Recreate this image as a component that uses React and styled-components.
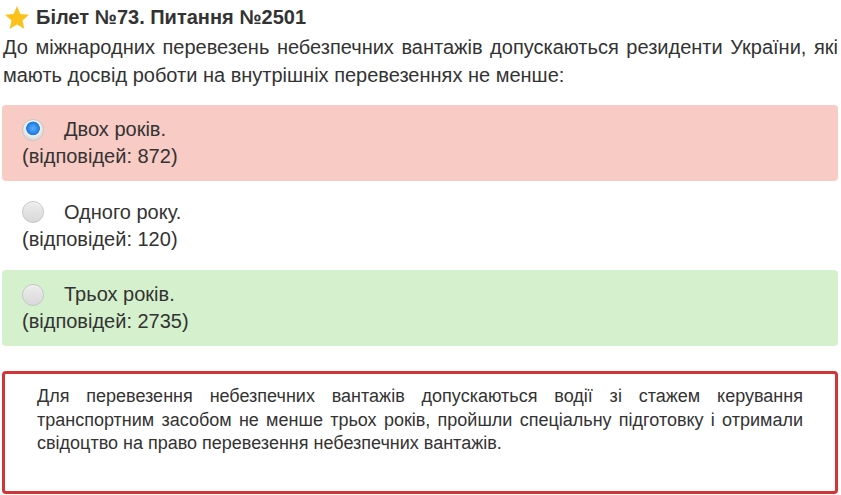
import styled, { createGlobalStyle } from 'styled-components'

const GlobalStyle = createGlobalStyle`
  html, body {
    margin: 0;
    padding: 0;
    background: #fff;
  }
  body {
    font-family: 'Liberation Sans', Arial, sans-serif;
    color: #333;
  }
`

const answers = [
  { text: 'Двох років.', count: 872, state: 'wrong', checked: true },
  { text: 'Одного року.', count: 120, state: 'none', checked: false },
  { text: 'Трьох років.', count: 2735, state: 'right', checked: false },
]

function Star() {
  return (
    <svg width="24" height="23" viewBox="1 0.8 22 21">
      <path
        d="M12 0.8 L15.1 8.1 L23 8.8 L17 14 L18.8 21.8 L12 17.7 L5.2 21.8 L7 14 L1 8.8 L8.9 8.1 Z"
        fill="#fcc21b"
      />
    </svg>
  )
}

function App() {
  return (
    <Page>
      <GlobalStyle />
      <Title>
        <Star />
        <span>Білет №73. Питання №2501</span>
      </Title>
      <Question>
        До міжнародних перевезень небезпечних вантажів допускаються резиденти України, які
        мають досвід роботи на внутрішніх перевезеннях не менше:
      </Question>
      <Answers>
        {answers.map((a) => (
          <Answer key={a.text} $state={a.state}>
            <AnswerLine>
              <Radio $checked={a.checked} />
              <span>{a.text}</span>
            </AnswerLine>
            <div>(відповідей: {a.count})</div>
          </Answer>
        ))}
      </Answers>
      <Explanation>
        Для перевезення небезпечних вантажів допускаються водії зі стажем керування
        транспортним засобом не менше трьох років, пройшли спеціальну підготовку і отримали
        свідоцтво на право перевезення небезпечних вантажів.
      </Explanation>
    </Page>
  )
}

export default App

const Page = styled.div`
  width: 836px;
  padding: 0 3px 0 2px;
  font-size: 20px;
`

const Title = styled.h1`
  display: flex;
  align-items: center;
  gap: 7px;
  margin: 0;
  padding: 5px 0 0 3px;
  height: 25px;
  font-size: 20px;
  font-weight: bold;
  color: #333;
`

const Question = styled.p`
  margin: 3px 0 0;
  padding-left: 1px;
  line-height: 28px;
  text-align: justify;
`

const Answers = styled.div`
  display: flex;
  flex-direction: column;
  gap: 6.5px;
  margin-top: 16px;
`

const Answer = styled.div`
  padding: 11px 20px;
  line-height: 27px;
  border-radius: 4px;
  background: ${(p) =>
    p.$state === 'wrong' ? '#f9cbc5' : p.$state === 'right' ? '#d5f0cd' : 'transparent'};
`

const AnswerLine = styled.div`
  display: flex;
  align-items: center;
  gap: 20px;
`

const Radio = styled.span`
  box-sizing: border-box;
  width: 22px;
  height: 22px;
  border-radius: 50%;
  border: 1px solid #c6c6c6;
  background: ${(p) =>
    p.$checked
      ? 'radial-gradient(circle at 50% 42%, #5aaefc 0, #2a86ea 5px, #1f78dc 6.5px, #f0f0f0 7.2px, #dcdcdc 10.5px)'
      : 'linear-gradient(#ececec, #d9d9d9)'};
  box-shadow: inset 0 1px 1px rgba(255, 255, 255, 0.6);
`

const Explanation = styled.div`
  margin-top: 25px;
  border: 3px solid #d13538;
  border-radius: 4px;
  padding: 11px 32px 35px;
  font-size: 18px;
  line-height: 23.5px;
  text-align: justify;
  color: #333;
`
